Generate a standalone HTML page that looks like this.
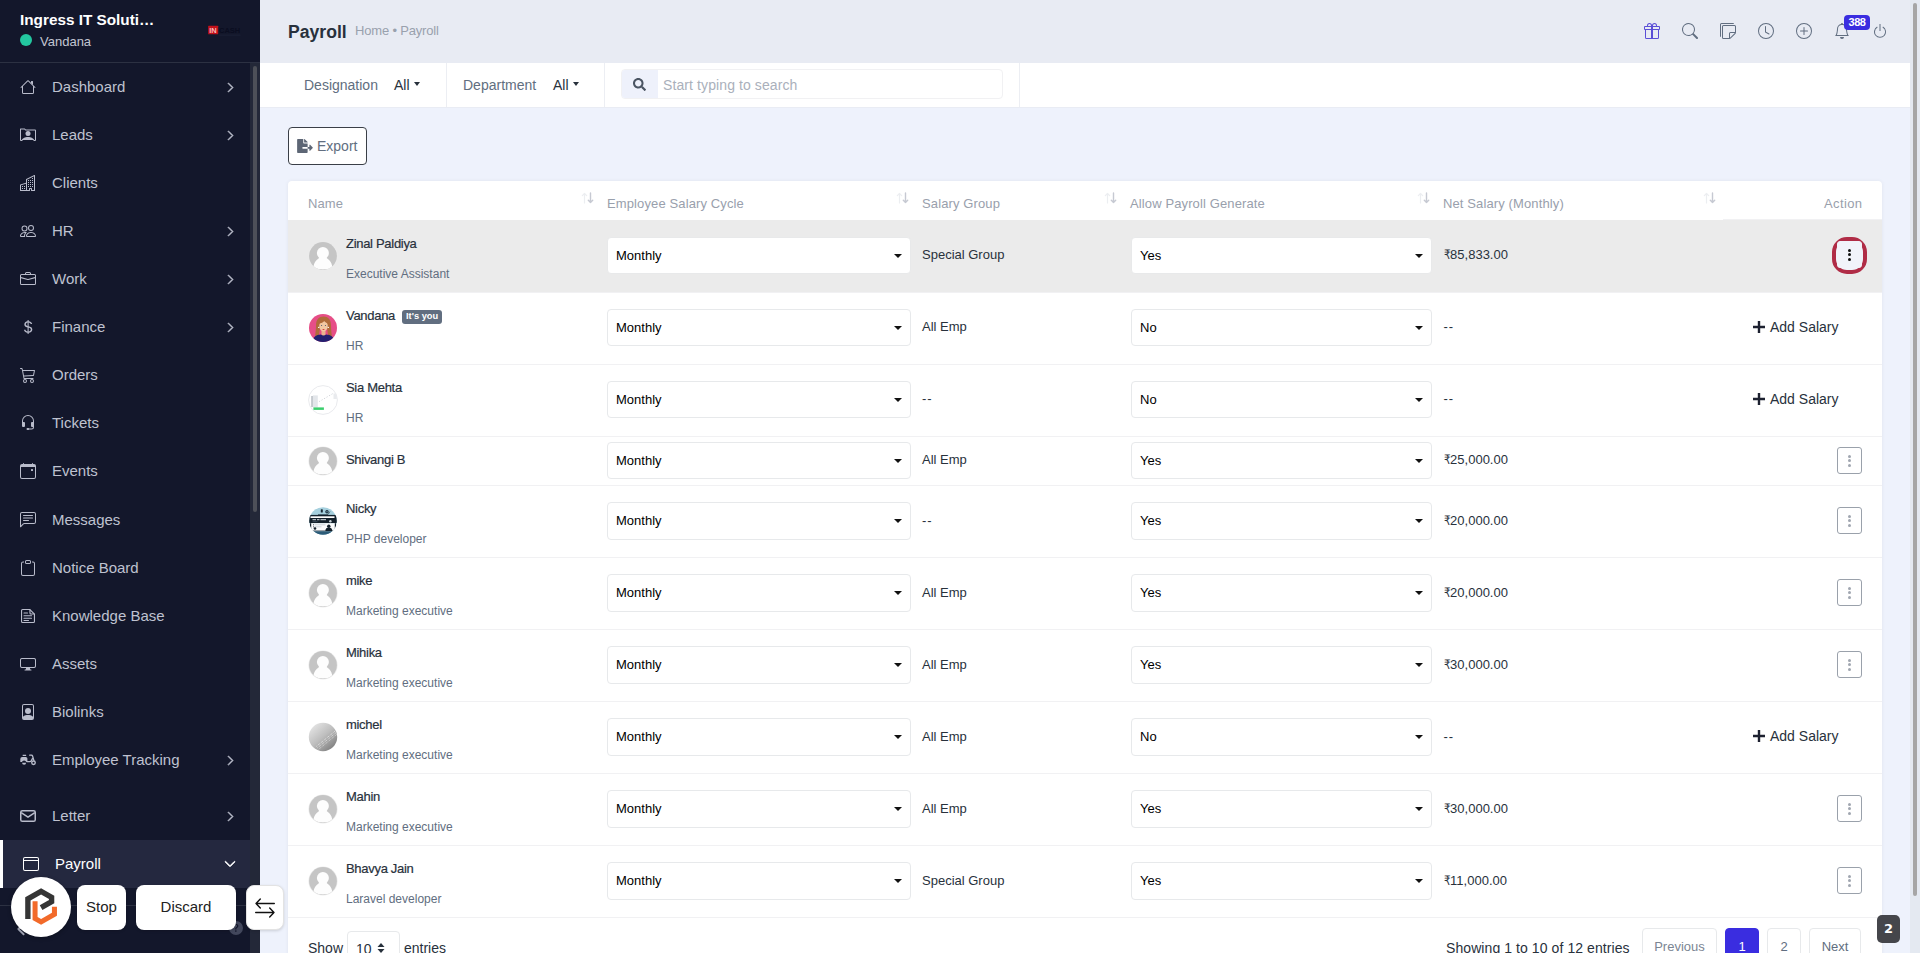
<!DOCTYPE html>
<html lang="en">
<head>
<meta charset="utf-8">
<title>Payroll</title>
<style>
*{box-sizing:border-box;margin:0;padding:0}
html,body{width:1920px;height:953px;overflow:hidden}
body{font-family:"Liberation Sans",Arial,sans-serif;background:#eef2fc;color:#28313c;position:relative;font-size:13px}
.abs{position:absolute}
svg{display:block}
/* sidebar */
#sidebar{position:absolute;left:0;top:0;width:260px;height:953px;background:#13172b;overflow:hidden}
#sb-head{position:absolute;left:0;top:0;width:260px;height:63px;border-bottom:1px solid #2c3142}
#sb-head .co{position:absolute;left:20px;top:11px;font-size:15.300px;font-weight:bold;color:#fff;letter-spacing:0px;white-space:nowrap}
#sb-head .dot{position:absolute;left:20px;top:34px;width:12px;height:12px;border-radius:50%;background:#23c7a0}
#sb-head .usr{position:absolute;left:40px;top:34px;font-size:13px;color:#c3c6d2;white-space:nowrap}
#sb-track{position:absolute;left:250px;top:63px;width:10px;height:890px;background:#232838}
#sb-thumb{position:absolute;left:253px;top:66px;width:4px;height:446px;background:#4d5058;border-radius:2px}
.mi{position:absolute;left:0;width:250px;height:48px}
.mi .ic{position:absolute;left:20px;top:16px;width:16px;height:16px;fill:#b9bccb;color:#b9bccb}
.mi .tx{position:absolute;left:52px;top:14px;font-size:15px;line-height:20px;color:#bfc2d0;white-space:nowrap}
.mi .ch{position:absolute;left:225px;top:19px;width:11px;height:11px;fill:#c0c3d1;stroke:#c0c3d1;stroke-width:1.300}
.mi.act{background:#24283f}
.mi.act .tx{color:#fff;left:55px}
.mi.act .ic{fill:#fff;color:#fff;left:23px}
.mi.act .ch{fill:#fff;stroke:#fff;stroke-width:1.300;left:224px;top:18px;width:12px;height:12px}
.mi.act:before{content:"";position:absolute;left:0;top:0;width:3px;height:48px;background:#fff}
/* header */
#hdr{position:absolute;left:260px;top:0;width:1650px;height:63px;background:#e8ebf3}
#hdr h1{position:absolute;left:28px;top:22px;font-size:17.600px;line-height:20px;font-weight:bold;color:#28313c}
#hdr .bc{position:absolute;left:95px;top:23px;font-size:13px;line-height:16px;color:#99a1ad;white-space:nowrap;letter-spacing:-.18px}
.hi{position:absolute;top:23px;width:16px;height:16px;fill:#616e80}
/* scrollbar */
#pg-track{position:absolute;left:1910px;top:0;width:10px;height:953px;background:#e4e9f1}
#pg-thumb{position:absolute;left:1913px;top:3px;width:4px;height:893px;background:#a6a6a6;border-radius:2px}

/* filter bar */
#fbar{position:absolute;left:260px;top:63px;width:1650px;height:45px;background:#fff;border-bottom:1px solid #e9ecf4}
#fbar .fl{position:absolute;top:14px;font-size:14px;line-height:16px;color:#616e80}
#fbar .fv{position:absolute;top:14px;font-size:14px;line-height:16px;color:#28313c}
#fbar .vr{position:absolute;top:0;width:1px;height:44px;background:#eceef3}
.car{position:absolute;top:19px;width:0;height:0;border-left:3.700px solid transparent;border-right:3.700px solid transparent;border-top:4.300px solid #28313c;margin-left:-.6px}
#sbox{position:absolute;left:361px;top:6px;width:382px;height:30px;border:1px solid #f1f1f3;border-radius:4px;background:#fff;overflow:hidden}
#sbox .sic{position:absolute;left:0;top:0;width:36px;height:30px;background:#eef1fb}
#sbox .sic svg{position:absolute;left:11px;top:8px;fill:#4b5563}
#sbox .ph{position:absolute;left:41px;top:7px;font-size:14px;letter-spacing:.1px;line-height:16px;color:#aab0bb;white-space:nowrap}
#export{position:absolute;left:288px;top:127px;width:79px;height:38px;background:#fff;border:1px solid #3a3f47;border-radius:4px}
#export svg{position:absolute;left:8px;top:11px;fill:#5d6675}
#export span{position:absolute;left:28px;top:10px;font-size:14px;line-height:16px;color:#616e80}
/* table */
#tbl{position:absolute;left:288px;top:181px;width:1594px;height:800px;background:#fff;border-radius:4px;box-shadow:0 0 4px rgba(0,0,0,.06)}
#tbl .th{position:absolute;top:15px;font-size:13px;line-height:16px;color:#99a0ac;white-space:nowrap;letter-spacing:.12px}
#tbl .srt{position:absolute;top:11px}
.tr{position:absolute;left:0;width:1594px}
.tr .ln{position:absolute;left:0;top:0;width:1594px;height:1px;background:#f1f1f3}
.tr.hl{background:#ebebeb}
.tr .av{position:absolute;left:20px;width:30px;height:30px}
.tr .nm{position:absolute;left:58px;font-size:13px;line-height:16px;color:#28313c;white-space:nowrap;letter-spacing:-.3px;-webkit-text-stroke:.2px #28313c}
.tr .ds{position:absolute;left:58px;font-size:12px;line-height:16px;color:#616e80;white-space:nowrap}
.tr .you{display:inline-block;margin-left:7px;background:#616e80;color:#fff;font-size:9.300px;font-weight:bold;line-height:13.500px;height:13.500px;padding:0 4px;letter-spacing:0;-webkit-text-stroke:0;border-radius:3px;vertical-align:1px}
.tr .sel{position:absolute;height:37px;border:1px solid #e7e9eb;border-radius:4px;background:#fff;font-size:13px;line-height:16px;color:#000;padding:10px 0 0 8px}
.tr.hl .sel{border-color:#e8e9ea}
.car2{position:absolute;width:0;height:0;border-left:4px solid transparent;border-right:4px solid transparent;border-top:4px solid #111}
.tr .tx{position:absolute;font-size:13px;line-height:16px;color:#28313c;white-space:nowrap;font-family:"Liberation Sans","DejaVu Sans",sans-serif}
.tr .add{position:absolute;left:1465px;font-size:14px;line-height:18px;color:#28313c;white-space:nowrap}
.tr .add svg{display:inline-block;margin-right:5px;vertical-align:-1px}
.tr .act{position:absolute;left:1549px;width:25px;height:27px;border:1px solid #9aa1ab;border-radius:3px;background:#fff}
.tr .act i{display:block;width:3px;height:3px;border-radius:50%;background:#a0a6b0;margin:0 auto 1.700px}
.tr .act i:first-child{margin-top:6.500px}
.tr .act.a1{border-color:#f1f3fa;background:#f1f3fa}
.tr .act.a1 i{background:#111}
.tr .ring{position:absolute;left:1544px;width:35px;height:37px;border:4px solid #b02c46;border-radius:15px;background:#f1f3fa}
.pb{position:absolute;height:36px;border:1px solid #e7e9eb;border-radius:4px;background:#fff;font-size:13px;line-height:16px;padding-top:10px;text-align:center;color:#616e80}
.ru{display:inline-block;transform:scaleX(.8);transform-origin:0 50%;margin-right:-1.700px}
/* overlay */
#ov-logo{position:absolute;left:11px;top:877px;width:60px;height:60px;border-radius:50%;background:#fff;box-shadow:0 1px 4px rgba(0,0,0,.3)}
#ov-logo svg{position:absolute;left:0;top:0}
.ovb{position:absolute;top:885px;height:45px;border-radius:8px;background:#fff;font-size:15px;line-height:43px;text-align:center;color:#222;box-shadow:0 1px 3px rgba(0,0,0,.15)}
</style>
</head>
<body>
<div id="sidebar">
<div id="sb-head"><div class="co">Ingress IT Soluti…</div><div class="dot"></div><div class="usr">Vandana</div><svg class="abs" style="left:208px;top:25px" width="34" height="12" viewBox="0 0 34 12"><rect x="0.200" y="0.700" width="10" height="8.500" rx=".5" fill="#c3111a"/><text x="1.200" y="7.700" font-family="Liberation Sans,sans-serif" font-size="7.500" font-weight="bold" fill="#f7b9b9">IN</text><text x="11" y="7.700" font-family="Liberation Sans,sans-serif" font-size="7.500" font-weight="bold" fill="#0a0d20">CASH</text><rect x="10.500" y="9.600" width="22" height="1" fill="#1c2136"/></svg></div>
<div id="sb-track"></div><div id="sb-thumb"></div>
<div class="mi" style="top:63px"><svg class="ic" style="" viewBox="0 0 16 16"><path fill-rule="evenodd" d="M2 13.5V7h1v6.5a.5.5 0 0 0 .5.5h9a.5.5 0 0 0 .5-.5V7h1v6.5a1.5 1.5 0 0 1-1.5 1.5h-9A1.5 1.5 0 0 1 2 13.5zm11-11V6l-2-2V2.5a.5.5 0 0 1 .5-.5h1a.5.5 0 0 1 .5.5z"/><path fill-rule="evenodd" d="M7.293 1.5a1 1 0 0 1 1.414 0l6.647 6.646a.5.5 0 0 1-.708.708L8 2.207 1.354 8.854a.5.5 0 1 1-.708-.708L7.293 1.5z"/></svg><div class="tx">Dashboard</div><svg class="ch" style="" viewBox="0 0 16 16"><path fill-rule="evenodd" d="M4.646 1.646a.5.5 0 0 1 .708 0l6 6a.5.5 0 0 1 0 .708l-6 6a.5.5 0 0 1-.708-.708L10.293 8 4.646 2.354a.5.5 0 0 1 0-.708z"/></svg></div>
<div class="mi" style="top:111px"><svg class="ic" style="" viewBox="0 0 16 16"><path d="M8 9.050a2.500 2.500 0 1 0 0-5 2.500 2.500 0 0 0 0 5Z"/><path d="M.5 1.500h4.300l1 1H15a1 1 0 0 1 1 1v9.500a1 1 0 0 1-1 1h-1.200l-.6-.9H2.800l-.6.900H1a1 1 0 0 1-1-1V2a.5.5 0 0 1 .5-.5zM1 2.500V13h.7c.453-1.270 3.263-3 6.300-3 3.038 0 5.847 1.730 6.300 3H15V3.500H5.400l-1-1z"/></svg><div class="tx">Leads</div><svg class="ch" style="" viewBox="0 0 16 16"><path fill-rule="evenodd" d="M4.646 1.646a.5.5 0 0 1 .708 0l6 6a.5.5 0 0 1 0 .708l-6 6a.5.5 0 0 1-.708-.708L10.293 8 4.646 2.354a.5.5 0 0 1 0-.708z"/></svg></div>
<div class="mi" style="top:159px"><svg class="ic" style="" viewBox="0 0 16 16"><path fill-rule="evenodd" d="M14.763.075A.5.5 0 0 1 15 .5v15a.5.5 0 0 1-.5.5h-3a.5.5 0 0 1-.5-.5V14h-1v1.5a.5.5 0 0 1-.5.5h-9a.5.5 0 0 1-.5-.5V10a.5.5 0 0 1 .342-.474L6 7.64V4.5a.5.5 0 0 1 .276-.447l8-4a.5.5 0 0 1 .487.022zM6 8.694 1 10.36V15h5V8.694zM7 15h2v-1.5a.5.5 0 0 1 .5-.5h2a.5.5 0 0 1 .5.5V15h2V1.309l-7 3.5V15z"/><path d="M2 11h1v1H2v-1zm2 0h1v1H4v-1zm-2 2h1v1H2v-1zm2 0h1v1H4v-1zm4-4h1v1H8V9zm2 0h1v1h-1V9zm-2 2h1v1H8v-1zm2 0h1v1h-1v-1zm2-2h1v1h-1V9zm0 2h1v1h-1v-1zM8 7h1v1H8V7zm2 0h1v1h-1V7zm2 0h1v1h-1V7zM8 5h1v1H8V5zm2 0h1v1h-1V5zm2 0h1v1h-1V5zm0-2h1v1h-1V3z"/></svg><div class="tx">Clients</div></div>
<div class="mi" style="top:207px"><svg class="ic" style="" viewBox="0 0 16 16"><path d="M15 14s1 0 1-1-1-4-5-4-5 3-5 4 1 1 1 1h8zm-7.978-1A.261.261 0 0 1 7 12.996c.001-.264.167-1.03.76-1.72C8.312 10.629 9.282 10 11 10c1.717 0 2.687.63 3.24 1.276.593.69.758 1.457.76 1.72l-.008.002a.274.274 0 0 1-.014.002H7.022zM11 7a2 2 0 1 0 0-4 2 2 0 0 0 0 4zm3-2a3 3 0 1 1-6 0 3 3 0 0 1 6 0zM6.936 9.28a5.88 5.88 0 0 0-1.23-.247A7.35 7.35 0 0 0 5 9c-4 0-5 3-5 4 0 .667.333 1 1 1h4.216A2.238 2.238 0 0 1 5 13c0-1.01.377-2.042 1.09-2.904.243-.294.526-.569.846-.816zM4.92 10A5.493 5.493 0 0 0 4 13H1c0-.26.164-1.03.76-1.724.545-.636 1.492-1.256 3.16-1.275zM1.5 5.5a3 3 0 1 1 6 0 3 3 0 0 1-6 0zm3-2a2 2 0 1 0 0 4 2 2 0 0 0 0-4z"/></svg><div class="tx">HR</div><svg class="ch" style="" viewBox="0 0 16 16"><path fill-rule="evenodd" d="M4.646 1.646a.5.5 0 0 1 .708 0l6 6a.5.5 0 0 1 0 .708l-6 6a.5.5 0 0 1-.708-.708L10.293 8 4.646 2.354a.5.5 0 0 1 0-.708z"/></svg></div>
<div class="mi" style="top:255px"><svg class="ic" style="" viewBox="0 0 16 16"><path d="M6.5 1A1.5 1.5 0 0 0 5 2.5V3H1.5A1.5 1.5 0 0 0 0 4.5v8A1.5 1.5 0 0 0 1.5 14h13a1.5 1.5 0 0 0 1.5-1.5v-8A1.5 1.5 0 0 0 14.5 3H11v-.5A1.5 1.5 0 0 0 9.5 1h-3zm0 1h3a.5.5 0 0 1 .5.5V3H6v-.5a.5.5 0 0 1 .5-.5zm1.886 6.914L15 7.151V12.5a.5.5 0 0 1-.5.5h-13a.5.5 0 0 1-.5-.5V7.15l6.614 1.764a1.5 1.5 0 0 0 .772 0zM1.5 4h13a.5.5 0 0 1 .5.5v1.616L8.129 7.948a.5.5 0 0 1-.258 0L1 6.116V4.5a.5.5 0 0 1 .5-.5z"/></svg><div class="tx">Work</div><svg class="ch" style="" viewBox="0 0 16 16"><path fill-rule="evenodd" d="M4.646 1.646a.5.5 0 0 1 .708 0l6 6a.5.5 0 0 1 0 .708l-6 6a.5.5 0 0 1-.708-.708L10.293 8 4.646 2.354a.5.5 0 0 1 0-.708z"/></svg></div>
<div class="mi" style="top:303px"><svg class="ic" style="" viewBox="0 0 16 16"><path d="M4 10.781c.148 1.667 1.513 2.85 3.591 3.003V15h1.043v-1.216c2.27-.179 3.678-1.438 3.678-3.3 0-1.59-.947-2.51-2.956-3.028l-.722-.187V3.467c1.122.11 1.879.714 2.07 1.616h1.47c-.166-1.6-1.54-2.748-3.54-2.875V1H7.591v1.233c-1.939.23-3.27 1.472-3.27 3.156 0 1.454.966 2.483 2.661 2.917l.61.162v4.031c-1.149-.17-1.94-.8-2.131-1.718H4zm3.391-3.836c-1.043-.263-1.6-.825-1.6-1.616 0-.944.704-1.641 1.8-1.828v3.495l-.2-.05zm1.591 1.872c1.287.323 1.852.859 1.852 1.769 0 1.097-.826 1.828-2.2 1.939V8.73l.348.086z"/></svg><div class="tx">Finance</div><svg class="ch" style="" viewBox="0 0 16 16"><path fill-rule="evenodd" d="M4.646 1.646a.5.5 0 0 1 .708 0l6 6a.5.5 0 0 1 0 .708l-6 6a.5.5 0 0 1-.708-.708L10.293 8 4.646 2.354a.5.5 0 0 1 0-.708z"/></svg></div>
<div class="mi" style="top:351px"><svg class="ic" style="" viewBox="0 0 16 16"><path d="M0 1.5A.5.5 0 0 1 .5 1H2a.5.5 0 0 1 .485.379L2.89 3H14.5a.5.5 0 0 1 .49.598l-1 5a.5.5 0 0 1-.465.401l-9.397.472L4.415 11H13a.5.5 0 0 1 0 1H4a.5.5 0 0 1-.491-.408L2.01 3.607 1.61 2H.5a.5.5 0 0 1-.5-.5zM3.102 4l.84 4.479 9.144-.459L13.89 4H3.102zM5 12a2 2 0 1 0 0 4 2 2 0 0 0 0-4zm7 0a2 2 0 1 0 0 4 2 2 0 0 0 0-4zm-7 1a1 1 0 1 1 0 2 1 1 0 0 1 0-2zm7 0a1 1 0 1 1 0 2 1 1 0 0 1 0-2z"/></svg><div class="tx">Orders</div></div>
<div class="mi" style="top:399px"><svg class="ic" style="" viewBox="0 0 16 16"><path d="M8 1a5 5 0 0 0-5 5v1h1a1 1 0 0 1 1 1v3a1 1 0 0 1-1 1H3a1 1 0 0 1-1-1V6a6 6 0 1 1 12 0v6a2.5 2.5 0 0 1-2.5 2.5H9.366a1 1 0 0 1-.866.5h-1a1 1 0 1 1 0-2h1a1 1 0 0 1 .866.5H11.5A1.5 1.5 0 0 0 13 12h-1a1 1 0 0 1-1-1V8a1 1 0 0 1 1-1h1V6a5 5 0 0 0-5-5z"/></svg><div class="tx">Tickets</div></div>
<div class="mi" style="top:447px"><svg class="ic" style="" viewBox="0 0 16 16"><path d="M11 6.5a.5.5 0 0 1 .5-.5h1a.5.5 0 0 1 .5.5v1a.5.5 0 0 1-.5.5h-1a.5.5 0 0 1-.5-.5v-1z"/><path d="M3.5 0a.5.5 0 0 1 .5.5V1h8V.5a.5.5 0 0 1 1 0V1h1a2 2 0 0 1 2 2v11a2 2 0 0 1-2 2H2a2 2 0 0 1-2-2V3a2 2 0 0 1 2-2h1V.5a.5.5 0 0 1 .5-.5zM1 4v10a1 1 0 0 0 1 1h12a1 1 0 0 0 1-1V4H1z"/></svg><div class="tx">Events</div></div>
<div class="mi" style="top:496px"><svg class="ic" style="" viewBox="0 0 16 16"><path d="M14 1a1 1 0 0 1 1 1v8a1 1 0 0 1-1 1H4.414A2 2 0 0 0 3 11.586l-2 2V2a1 1 0 0 1 1-1h12zM2 0a2 2 0 0 0-2 2v12.793a.5.5 0 0 0 .854.353l2.853-2.853A1 1 0 0 1 4.414 12H14a2 2 0 0 0 2-2V2a2 2 0 0 0-2-2H2z"/><path d="M3 3.5a.5.5 0 0 1 .5-.5h9a.5.5 0 0 1 0 1h-9a.5.5 0 0 1-.5-.5zM3 6a.5.5 0 0 1 .5-.5h9a.5.5 0 0 1 0 1h-9A.5.5 0 0 1 3 6zm0 2.5a.5.5 0 0 1 .5-.5h5a.5.5 0 0 1 0 1h-5a.5.5 0 0 1-.5-.5z"/></svg><div class="tx">Messages</div></div>
<div class="mi" style="top:544px"><svg class="ic" style="" viewBox="0 0 16 16"><path d="M4 1.5H3a2 2 0 0 0-2 2V14a2 2 0 0 0 2 2h10a2 2 0 0 0 2-2V3.5a2 2 0 0 0-2-2h-1v1h1a1 1 0 0 1 1 1V14a1 1 0 0 1-1 1H3a1 1 0 0 1-1-1V3.5a1 1 0 0 1 1-1h1v-1z"/><path d="M9.5 1a.5.5 0 0 1 .5.5v1a.5.5 0 0 1-.5.5h-3a.5.5 0 0 1-.5-.5v-1a.5.5 0 0 1 .5-.5h3zm-3-1A1.5 1.5 0 0 0 5 1.5v1A1.5 1.5 0 0 0 6.5 4h3A1.5 1.5 0 0 0 11 2.5v-1A1.5 1.5 0 0 0 9.5 0h-3z"/></svg><div class="tx">Notice Board</div></div>
<div class="mi" style="top:592px"><svg class="ic" style="" viewBox="0 0 16 16"><g fill="none" stroke="currentColor" stroke-width="1.100" stroke-linejoin="round" stroke-linecap="round"><path d="M1.550 2.550a1 1 0 0 1 1-1h7.400l4.500 4.500v7.400a1 1 0 0 1-1 1H2.550a1 1 0 0 1-1-1z"/><path d="M9.950 1.700V5a1 1 0 0 0 1 1h3.300"/><path d="M4 5h3.500M4 7.800h7.500M4 10.300h7.500M4 12.500h4.500"/></g></svg><div class="tx">Knowledge Base</div></div>
<div class="mi" style="top:640px"><svg class="ic" style="" viewBox="0 0 16 16"><path d="M0 4s0-2 2-2h12s2 0 2 2v6s0 2-2 2h-4c0 .667.083 1.167.25 1.5H11a.5.5 0 0 1 0 1H5a.5.5 0 0 1 0-1h.75c.167-.333.25-.833.25-1.5H2s-2 0-2-2V4zm1.398-.855a.758.758 0 0 0-.254.302A1.460 1.460 0 0 0 1 4.01V10c0 .325.078.502.145.602.07.105.17.188.302.254a1.464 1.464 0 0 0 .538.143L2.01 11H14c.325 0 .502-.078.602-.145a.758.758 0 0 0 .254-.302 1.464 1.464 0 0 0 .143-.538L15 9.99V4c0-.325-.078-.502-.145-.602a.757.757 0 0 0-.302-.254A1.460 1.460 0 0 0 13.99 3H2c-.325 0-.502.078-.602.145z"/></svg><div class="tx">Assets</div></div>
<div class="mi" style="top:688px"><svg class="ic" style="" viewBox="0 0 16 16"><path d="M12 1a1 1 0 0 1 1 1v10.755S12 11 8 11s-5 1.755-5 1.755V2a1 1 0 0 1 1-1h8zM4 0a2 2 0 0 0-2 2v12a2 2 0 0 0 2 2h8a2 2 0 0 0 2-2V2a2 2 0 0 0-2-2H4z"/><path d="M8 10a3 3 0 1 0 0-6 3 3 0 0 0 0 6z"/></svg><div class="tx">Biolinks</div></div>
<div class="mi" style="top:736px"><svg class="ic" style="" viewBox="0 0 16 16"><rect x="2.600" y="2.700" width="3.600" height="1.200" rx=".3"/><path d="M2.300 5h3.500a1.600 1.600 0 0 1 1.600 1.600v3.500H6.300a2.300 2.300 0 0 0-4.400 0H.300V7a2 2 0 0 1 2-2z"/><path d="M2.100 10.800a2 2 0 0 0 4 0z"/><path d="M9.700 3.200h1.700a1.200 1.200 0 0 1 1.150.850l1.300 4.300M7.300 9.700h2.300a2 2 0 0 0 1.800-1.100l.9-1.900" fill="none" stroke="currentColor" stroke-width="1.300" stroke-linecap="round" stroke-linejoin="round"/><circle cx="13.500" cy="10.800" r="1.750" fill="none" stroke="currentColor" stroke-width="1.400"/></svg><div class="tx">Employee Tracking</div><svg class="ch" style="" viewBox="0 0 16 16"><path fill-rule="evenodd" d="M4.646 1.646a.5.5 0 0 1 .708 0l6 6a.5.5 0 0 1 0 .708l-6 6a.5.5 0 0 1-.708-.708L10.293 8 4.646 2.354a.5.5 0 0 1 0-.708z"/></svg></div>
<div class="mi" style="top:792px"><svg class="ic" style="" viewBox="0 0 16 16"><rect x="0.750" y="2.750" width="14.500" height="10.500" rx="1.600" fill="none" stroke="currentColor" stroke-width="1.500"/><path d="M1.200 4.600L8 9.200l6.800-4.600" fill="none" stroke="currentColor" stroke-width="1.500" stroke-linejoin="round"/></svg><div class="tx">Letter</div><svg class="ch" style="" viewBox="0 0 16 16"><path fill-rule="evenodd" d="M4.646 1.646a.5.5 0 0 1 .708 0l6 6a.5.5 0 0 1 0 .708l-6 6a.5.5 0 0 1-.708-.708L10.293 8 4.646 2.354a.5.5 0 0 1 0-.708z"/></svg></div>
<div class="mi act" style="top:840px"><svg class="ic" style="" viewBox="0 0 16 16"><path d="M14 2a1 1 0 0 1 1 1v10a1 1 0 0 1-1 1H2a1 1 0 0 1-1-1V3a1 1 0 0 1 1-1h12zM2 1a2 2 0 0 0-2 2v10a2 2 0 0 0 2 2h12a2 2 0 0 0 2-2V3a2 2 0 0 0-2-2H2z"/><path d="M1 4h14v1H1z"/></svg><div class="tx">Payroll</div><svg class="ch" style="" viewBox="0 0 16 16"><path fill-rule="evenodd" d="M1.646 4.646a.5.5 0 0 1 .708 0L8 10.293l5.646-5.647a.5.5 0 0 1 .708.708l-6 6a.5.5 0 0 1-.708 0l-6-6a.5.5 0 0 1 0-.708z"/></svg></div>
<div class="abs" style="left:0;top:905px;width:260px;height:1px;background:#2c3142"></div>
<svg class="abs" style="left:14px;top:922px;width:14px;height:14px;fill:#a9adbd;stroke:#a9adbd;stroke-width:1.2" viewBox="0 0 16 16"><path fill-rule="evenodd" d="M11.354 1.646a.5.5 0 0 1 0 .708L5.707 8l5.647 5.646a.5.5 0 0 1-.708.708l-6-6a.5.5 0 0 1 0-.708l6-6a.5.5 0 0 1 .708 0z"/></svg>
<svg class="abs" style="left:229px;top:921px;width:14px;height:14px;fill:#42475c" viewBox="0 0 16 16"><path d="M16 8A8 8 0 1 1 0 8a8 8 0 0 1 16 0zM5.496 6.033h.825c.138 0 .248-.113.266-.25.09-.656.54-1.134 1.342-1.134.686 0 1.314.343 1.314 1.168 0 .635-.374.927-.965 1.371-.673.489-1.206 1.060-1.168 1.987l.003.217a.25.25 0 0 0 .25.246h.811a.25.25 0 0 0 .25-.25v-.105c0-.718.273-.927 1.010-1.486.609-.463 1.244-.977 1.244-2.056 0-1.511-1.276-2.241-2.673-2.241-1.267 0-2.655.590-2.750 2.286a.237.237 0 0 0 .241.247zm2.325 6.443c.61 0 1.029-.394 1.029-.927 0-.552-.42-.940-1.029-.940-.584 0-1.009.388-1.009.940 0 .533.425.927 1.010.927z"/></svg>
</div>
<div id="hdr"><h1>Payroll</h1><div class="bc">Home &bull; Payroll</div>
<svg class="hi" style="left:1384px;fill:#5b4fd6" viewBox="0 0 16 16"><path d="M3 2.5a2.5 2.5 0 0 1 5 0 2.5 2.5 0 0 1 5 0v.006c0 .07 0 .27-.038.494H15a1 1 0 0 1 1 1v2a1 1 0 0 1-1 1v7.5a1.5 1.5 0 0 1-1.5 1.5h-11A1.5 1.5 0 0 1 1 14.5V7a1 1 0 0 1-1-1V4a1 1 0 0 1 1-1h2.038A2.968 2.968 0 0 1 3 2.506V2.5zm1.068.5H7v-.5a1.5 1.5 0 1 0-3 0c0 .085.002.274.045.43a.522.522 0 0 0 .023.07zM9 3h2.932a.56.56 0 0 0 .023-.07c.043-.156.045-.345.045-.43a1.5 1.5 0 0 0-3 0V3zM1 4v2h6V4H1zm8 0v2h6V4H9zm5 3H9v8h4.5a.5.5 0 0 0 .5-.5V7zm-7 8V7H2v7.5a.5.5 0 0 0 .5.5H7z"/></svg>
<svg class="hi" style="left:1422px" viewBox="0 0 16 16"><path d="M11.742 10.344a6.5 6.5 0 1 0-1.397 1.398h-.001c.03.04.062.078.098.115l3.85 3.85a1 1 0 0 0 1.415-1.414l-3.85-3.85a1.007 1.007 0 0 0-.115-.1zM12 6.5a5.5 5.5 0 1 1-11 0 5.500 5.500 0 0 1 11 0z"/></svg>
<svg class="hi" style="left:1460px" viewBox="0 0 16 16"><path d="M1.5 0A1.5 1.5 0 0 0 0 1.5V13a1 1 0 0 0 1 1V1.5a.5.5 0 0 1 .5-.5H14a1 1 0 0 0-1-1H1.5z"/><path d="M3.5 2A1.5 1.5 0 0 0 2 3.5v11A1.5 1.5 0 0 0 3.5 16h6.086a1.5 1.5 0 0 0 1.06-.44l4.915-4.914A1.5 1.5 0 0 0 16 9.586V3.5A1.5 1.5 0 0 0 14.5 2h-11zM3 3.5a.5.5 0 0 1 .5-.5h11a.5.5 0 0 1 .5.5V9h-4.5A1.5 1.5 0 0 0 9 10.5V15H3.5a.5.5 0 0 1-.5-.5v-11zm7 11.293V10.5a.5.5 0 0 1 .5-.5h4.293L10 14.793z"/></svg>
<svg class="hi" style="left:1498px" viewBox="0 0 16 16"><path d="M8 3.5a.5.5 0 0 0-1 0V9a.5.5 0 0 0 .252.434l3.5 2a.5.5 0 0 0 .496-.868L8 8.71V3.5z"/><path d="M8 16A8 8 0 1 0 8 0a8 8 0 0 0 0 16zm7-8A7 7 0 1 1 1 8a7 7 0 0 1 14 0z"/></svg>
<svg class="hi" style="left:1536px" viewBox="0 0 16 16"><path d="M8 15A7 7 0 1 1 8 1a7 7 0 0 1 0 14zm0 1A8 8 0 1 0 8 0a8 8 0 0 0 0 16z"/><path d="M8 4a.5.5 0 0 1 .5.5v3h3a.5.5 0 0 1 0 1h-3v3a.5.5 0 0 1-1 0v-3h-3a.5.5 0 0 1 0-1h3v-3A.5.5 0 0 1 8 4z"/></svg>
<svg class="hi" style="left:1574px" viewBox="0 0 16 16"><path d="M8 16a2 2 0 0 0 2-2H6a2 2 0 0 0 2 2zM8 1.918l-.797.161A4.002 4.002 0 0 0 4 6c0 .628-.134 2.197-.459 3.742-.16.767-.376 1.566-.663 2.258h10.244c-.287-.692-.502-1.49-.663-2.258C12.134 8.197 12 6.628 12 6a4.002 4.002 0 0 0-3.203-3.92L8 1.917zM14.22 12c.223.447.481.801.78 1H1c.299-.199.557-.553.78-1C2.68 10.2 3 6.88 3 6c0-2.42 1.72-4.44 4.005-4.901a1 1 0 1 1 1.99 0A5.002 5.002 0 0 1 13 6c0 .88.32 4.2 1.22 6z"/></svg>
<svg class="hi" style="left:1612px" viewBox="0 0 16 16"><path d="M7.5 1v7h1V1h-1z"/><path d="M3 8.812a4.999 4.999 0 0 1 2.578-4.375l-.485-.874A6 6 0 1 0 11 3.616l-.501.865A5 5 0 1 1 3 8.812z"/></svg>
<div class="abs" style="left:1584px;top:15px;width:26px;height:15px;border-radius:4px;background:#3a2de0;color:#fff;font-size:11px;line-height:15px;text-align:center;font-weight:bold;letter-spacing:-0.5px">388</div>
</div>
<div id="pg-track"></div><div id="pg-thumb"></div>
<div id="fbar">
<div class="fl" style="left:44px">Designation</div><div class="fv" style="left:134px">All</div><i class="car" style="left:155px"></i>
<div class="vr" style="left:186px"></div>
<div class="fl" style="left:203px">Department</div><div class="fv" style="left:293px">All</div><i class="car" style="left:314px"></i>
<div class="vr" style="left:344px"></div>
<div id="sbox"><div class="sic"><svg viewBox="0 0 512 512" width="13" height="13"><path d="M505 442.700L405.300 343c-4.500-4.500-10.600-7-17-7H372c27.600-35.300 44-79.700 44-128C416 93.100 322.900 0 208 0S0 93.100 0 208s93.100 208 208 208c48.300 0 92.700-16.400 128-44v16.300c0 6.400 2.500 12.500 7 17l99.700 99.700c9.400 9.400 24.600 9.400 33.900 0l28.300-28.300c9.400-9.400 9.400-24.600.100-34zM208 336c-70.700 0-128-57.200-128-128 0-70.700 57.200-128 128-128 70.700 0 128 57.200 128 128 0 70.700-57.200 128-128 128z"/></svg></div><div class="ph">Start typing to search</div></div>
<div class="vr" style="left:759px"></div>
</div>
<div id="export"><svg viewBox="0 0 576 512" width="16" height="14"><path d="M384 121.900c0-6.300-2.500-12.400-7-16.900L279.100 7c-4.500-4.500-10.600-7-17-7H256v128h128v-6.100zM571 308l-95.700-96.400c-10.100-10.100-27.400-3-27.400 11.300V288h-64v64h64v65.200c0 14.300 17.300 21.400 27.400 11.300L571 332c6.600-6.600 6.600-17.400 0-24zm-379 28v-32c0-8.800 7.200-16 16-16h176V160H248c-13.200 0-24-10.800-24-24V0H24C10.700 0 0 10.700 0 24v464c0 13.300 10.700 24 24 24h336c13.300 0 24-10.700 24-24V352H208c-8.800 0-16-7.200-16-16z"/></svg><span>Export</span></div>
<div id="tbl">
<div class="th" style="left:20px">Name</div><div class="th" style="left:319px">Employee Salary Cycle</div><div class="th" style="left:634px">Salary Group</div><div class="th" style="left:842px">Allow Payroll Generate</div><div class="th" style="left:1155px">Net Salary (Monthly)</div><div class="th" style="right:19.500px;letter-spacing:.4px">Action</div>
<div class="abs" style="left:1435px;top:38px;width:159px;height:1px;background:#f1f1f3"></div>
<svg class="srt" style="left:293px" viewBox="0 0 13 12" width="13" height="12"><g fill="none" stroke-width="1.200" stroke-linecap="round" stroke-linejoin="round"><path d="M3.500 11V1.500M1.300 3.700L3.500 1.500 5.700 3.700" stroke="#eceef1"/><path d="M9.500 1v9.500M7.300 8.300L9.500 10.500 11.700 8.300" stroke="#c6c9d2" stroke-width="1.400"/></g></svg>
<svg class="srt" style="left:608px" viewBox="0 0 13 12" width="13" height="12"><g fill="none" stroke-width="1.200" stroke-linecap="round" stroke-linejoin="round"><path d="M3.500 11V1.500M1.300 3.700L3.500 1.500 5.700 3.700" stroke="#eceef1"/><path d="M9.500 1v9.500M7.300 8.300L9.500 10.500 11.700 8.300" stroke="#c6c9d2" stroke-width="1.400"/></g></svg>
<svg class="srt" style="left:816px" viewBox="0 0 13 12" width="13" height="12"><g fill="none" stroke-width="1.200" stroke-linecap="round" stroke-linejoin="round"><path d="M3.500 11V1.500M1.300 3.700L3.500 1.500 5.700 3.700" stroke="#eceef1"/><path d="M9.500 1v9.500M7.300 8.300L9.500 10.500 11.700 8.300" stroke="#c6c9d2" stroke-width="1.400"/></g></svg>
<svg class="srt" style="left:1129px" viewBox="0 0 13 12" width="13" height="12"><g fill="none" stroke-width="1.200" stroke-linecap="round" stroke-linejoin="round"><path d="M3.500 11V1.500M1.300 3.700L3.500 1.500 5.700 3.700" stroke="#eceef1"/><path d="M9.500 1v9.500M7.300 8.300L9.500 10.500 11.700 8.300" stroke="#c6c9d2" stroke-width="1.400"/></g></svg>
<svg class="srt" style="left:1415px" viewBox="0 0 13 12" width="13" height="12"><g fill="none" stroke-width="1.200" stroke-linecap="round" stroke-linejoin="round"><path d="M3.500 11V1.500M1.300 3.700L3.500 1.500 5.700 3.700" stroke="#eceef1"/><path d="M9.500 1v9.500M7.300 8.300L9.500 10.500 11.700 8.300" stroke="#c6c9d2" stroke-width="1.400"/></g></svg>
<div class="tr hl" style="top:39px;height:72px">
<svg class="av" style="top:21px" viewBox="-1 -1 30 30"><circle cx="14" cy="14" r="14.600" fill="#ececec"/><circle cx="14" cy="14" r="13.900" fill="#c5c5c5"/><clipPath id="c0"><circle cx="14" cy="14" r="13.900"/></clipPath><g clip-path="url(#c0)" fill="#fdfdfd"><circle cx="13.900" cy="11" r="6"/><path d="M10.500 15.500C9 17.500 4.700 19 4.500 25.500 7 28 21 28 23.300 25.500 23.100 19 18.800 17.500 17.300 15.500z"/></g></svg>
<div class="nm" style="top:16px">Zinal Paldiya</div><div class="ds" style="top:46px">Executive Assistant</div>
<div class="sel" style="left:319px;width:304px;top:17px">Monthly</div><i class="car2" style="left:606px;top:34px"></i>
<div class="tx" style="left:634px;top:27px">Special Group</div>
<div class="sel" style="left:843px;width:301px;top:17px">Yes</div><i class="car2" style="left:1127px;top:34px"></i>
<div class="tx" style="left:1155.500px;top:27px"><span class=ru>₹</span>85,833.00</div>
<div class="ring" style="top:17px"></div>
<div class="act a1" style="top:21px"><i></i><i></i><i></i></div>
</div>
<div class="tr" style="top:111px;height:72px">
<div class="ln"></div>
<svg class="av" style="top:21px" viewBox="-1 -1 30 30"><clipPath id="c1"><circle cx="14" cy="14" r="14"/></clipPath><g clip-path="url(#c1)"><rect x="-1" y="-1" width="30" height="30" fill="#e64e87"/><path d="M7 11.500C7 5.500 10 2.500 14.500 2.500S22 5.500 22 11.500c0 5 .8 9 1 12.500h-3.500L18 14h-7l-1.500 10H6c.2-3.500 1-7.500 1-12.500z" fill="#b06a3a"/><path d="M12.500 16h4v6h-4z" fill="#e9b48e"/><ellipse cx="14.500" cy="12" rx="4.300" ry="5.400" fill="#f2c7a2"/><path d="M10 9.500c1-3 3-4 4.800-4 2 0 3.700 1.300 4.400 4-1.500-.3-3-1.200-4-2.500-1 1.300-3 2.300-5.200 2.500z" fill="#b06a3a"/><circle cx="12.600" cy="11.500" r=".55" fill="#3b4a6b"/><circle cx="16.400" cy="11.500" r=".55" fill="#3b4a6b"/><ellipse cx="14.500" cy="15.500" rx="1.100" ry=".55" fill="#d63a3a"/><circle cx="9.700" cy="13.400" r=".7" fill="#fff"/><circle cx="19.300" cy="13.400" r=".7" fill="#fff"/><path d="M3.500 29c0-5.500 3-8.200 8.500-8.500 1.500 1.200 3.500 1.200 5 0 5.500.3 8.500 3 8.500 8.500z" fill="#22206f"/></g></svg>
<div class="nm" style="top:16px">Vandana<span class="you">It's you</span></div><div class="ds" style="top:46px">HR</div>
<div class="sel" style="left:319px;width:304px;top:17px">Monthly</div><i class="car2" style="left:606px;top:34px"></i>
<div class="tx" style="left:634px;top:27px">All Emp</div>
<div class="sel" style="left:843px;width:301px;top:17px">No</div><i class="car2" style="left:1127px;top:34px"></i>
<div class="tx" style="left:1155.500px;top:27px;letter-spacing:.8px">--</div>
<div class="add" style="top:26px"><svg viewBox="0 0 12 12" width="12" height="12"><path d="M4.800 0h2.400v4.800H12v2.400H7.200V12H4.800V7.200H0V4.800h4.800z" fill="#1d2130"/></svg>Add Salary</div>
</div>
<div class="tr" style="top:183px;height:72px">
<div class="ln"></div>
<svg class="av" style="top:21px" viewBox="-1 -1 30 30"><circle cx="14" cy="14" r="14.400" fill="#fff" stroke="#e6e8eb" stroke-width=".9"/><clipPath id="c2"><circle cx="14" cy="14" r="14"/></clipPath><g clip-path="url(#c2)"><rect x="2.600" y="10" width=".9" height="11" fill="#7d8794"/><rect x="3.800" y="9.400" width="5" height="12" fill="#e3e6ea"/><rect x="4.400" y="21.400" width="10.500" height="2.500" fill="#3ccf6e"/><path d="M10 15.700L24.500 7.200" stroke="#aab1ba" stroke-width=".5" stroke-dasharray="1.300 1.600"/><rect x="24.500" y="7.500" width="4" height="5.500" fill="#e9ebee"/></g></svg>
<div class="nm" style="top:16px">Sia Mehta</div><div class="ds" style="top:46px">HR</div>
<div class="sel" style="left:319px;width:304px;top:17px">Monthly</div><i class="car2" style="left:606px;top:34px"></i>
<div class="tx" style="left:634px;top:27px;letter-spacing:.8px">--</div>
<div class="sel" style="left:843px;width:301px;top:17px">No</div><i class="car2" style="left:1127px;top:34px"></i>
<div class="tx" style="left:1155.500px;top:27px;letter-spacing:.8px">--</div>
<div class="add" style="top:26px"><svg viewBox="0 0 12 12" width="12" height="12"><path d="M4.800 0h2.400v4.800H12v2.400H7.200V12H4.800V7.200H0V4.800h4.800z" fill="#1d2130"/></svg>Add Salary</div>
</div>
<div class="tr" style="top:255px;height:49px">
<div class="ln"></div>
<svg class="av" style="top:10px" viewBox="-1 -1 30 30"><circle cx="14" cy="14" r="14.600" fill="#ececec"/><circle cx="14" cy="14" r="13.900" fill="#c5c5c5"/><clipPath id="c3"><circle cx="14" cy="14" r="13.900"/></clipPath><g clip-path="url(#c3)" fill="#fdfdfd"><circle cx="13.900" cy="11" r="6"/><path d="M10.500 15.500C9 17.500 4.700 19 4.500 25.500 7 28 21 28 23.300 25.500 23.100 19 18.800 17.500 17.300 15.500z"/></g></svg>
<div class="nm" style="top:16px">Shivangi B</div>
<div class="sel" style="left:319px;width:304px;top:6px">Monthly</div><i class="car2" style="left:606px;top:23px"></i>
<div class="tx" style="left:634px;top:16px">All Emp</div>
<div class="sel" style="left:843px;width:301px;top:6px">Yes</div><i class="car2" style="left:1127px;top:23px"></i>
<div class="tx" style="left:1155.500px;top:16px"><span class=ru>₹</span>25,000.00</div>
<div class="act" style="top:11px"><i></i><i></i><i></i></div>
</div>
<div class="tr" style="top:304px;height:72px">
<div class="ln"></div>
<svg class="av" style="top:21px" viewBox="-1 -1 30 30"><clipPath id="c4"><circle cx="14" cy="14" r="13.800"/></clipPath><g clip-path="url(#c4)"><rect x="-1" y="-1" width="30" height="30" fill="#a6d0de"/><rect x="11.800" y="2.200" width="2" height="3.300" rx=".6" fill="#1b2a36"/><circle cx="18" cy="4.700" r="1.700" fill="#1b2a36"/><circle cx="18" cy="4.700" r=".7" fill="#6fa3b8"/><path d="M9 7.500h10l2-3" stroke="#1b2a36" stroke-width=".6" fill="none"/><rect x="0" y="7.900" width="28" height="8.300" fill="#13202b"/><rect x="1.500" y="9.300" width="24" height="1.700" fill="#fff"/><path d="M3.500 12.700h3.500m1 0h2.500m1 0h5.500" stroke="#e8eef2" stroke-width=".9"/><path d="M3.500 14.600h5" stroke="#5d7384" stroke-width=".5"/><circle cx="21.400" cy="14.200" r="1.200" fill="#c8d3da"/><rect x="0" y="16.200" width="28" height="8" fill="#fbfcfd"/><rect x="1" y="16.200" width="1.200" height="8" fill="#13202b"/><rect x="25.800" y="16.200" width="1.200" height="8" fill="#13202b"/><path d="M4 17.800h.8M4 19.800h.8" stroke="#13202b" stroke-width=".9"/><path d="M5.500 17.800h11M5.500 19.800h7" stroke="#9aa9b4" stroke-width=".5"/><circle cx="6" cy="21.500" r="1.300" fill="#13202b"/><circle cx="19.800" cy="19.300" r="1.700" fill="#13202b"/><path d="M16.300 24c0-2.600 1.500-3.600 3.500-3.600s3.500 1 3.500 3.600z" fill="#13202b"/><rect x="2" y="23.600" width="24" height=".8" fill="#13202b"/><rect x="0" y="24.400" width="28" height="5" fill="#2c5b78"/></g></svg>
<div class="nm" style="top:16px">Nicky</div><div class="ds" style="top:46px">PHP developer</div>
<div class="sel" style="left:319px;width:304px;top:17px;height:38px">Monthly</div><i class="car2" style="left:606px;top:34px"></i>
<div class="tx" style="left:634px;top:28px;letter-spacing:.8px">--</div>
<div class="sel" style="left:843px;width:301px;top:17px;height:38px">Yes</div><i class="car2" style="left:1127px;top:34px"></i>
<div class="tx" style="left:1155.500px;top:28px"><span class=ru>₹</span>20,000.00</div>
<div class="act" style="top:22px"><i></i><i></i><i></i></div>
</div>
<div class="tr" style="top:376px;height:72px">
<div class="ln"></div>
<svg class="av" style="top:21px" viewBox="-1 -1 30 30"><circle cx="14" cy="14" r="14.600" fill="#ececec"/><circle cx="14" cy="14" r="13.900" fill="#c5c5c5"/><clipPath id="c5"><circle cx="14" cy="14" r="13.900"/></clipPath><g clip-path="url(#c5)" fill="#fdfdfd"><circle cx="13.900" cy="11" r="6"/><path d="M10.500 15.500C9 17.500 4.700 19 4.500 25.500 7 28 21 28 23.300 25.500 23.100 19 18.800 17.500 17.300 15.500z"/></g></svg>
<div class="nm" style="top:16px">mike</div><div class="ds" style="top:46px">Marketing executive</div>
<div class="sel" style="left:319px;width:304px;top:17px;height:38px">Monthly</div><i class="car2" style="left:606px;top:34px"></i>
<div class="tx" style="left:634px;top:28px">All Emp</div>
<div class="sel" style="left:843px;width:301px;top:17px;height:38px">Yes</div><i class="car2" style="left:1127px;top:34px"></i>
<div class="tx" style="left:1155.500px;top:28px"><span class=ru>₹</span>20,000.00</div>
<div class="act" style="top:22px"><i></i><i></i><i></i></div>
</div>
<div class="tr" style="top:448px;height:72px">
<div class="ln"></div>
<svg class="av" style="top:21px" viewBox="-1 -1 30 30"><circle cx="14" cy="14" r="14.600" fill="#ececec"/><circle cx="14" cy="14" r="13.900" fill="#c5c5c5"/><clipPath id="c6"><circle cx="14" cy="14" r="13.900"/></clipPath><g clip-path="url(#c6)" fill="#fdfdfd"><circle cx="13.900" cy="11" r="6"/><path d="M10.500 15.500C9 17.500 4.700 19 4.500 25.500 7 28 21 28 23.300 25.500 23.100 19 18.800 17.500 17.300 15.500z"/></g></svg>
<div class="nm" style="top:16px">Mihika</div><div class="ds" style="top:46px">Marketing executive</div>
<div class="sel" style="left:319px;width:304px;top:17px;height:38px">Monthly</div><i class="car2" style="left:606px;top:34px"></i>
<div class="tx" style="left:634px;top:28px">All Emp</div>
<div class="sel" style="left:843px;width:301px;top:17px;height:38px">Yes</div><i class="car2" style="left:1127px;top:34px"></i>
<div class="tx" style="left:1155.500px;top:28px"><span class=ru>₹</span>30,000.00</div>
<div class="act" style="top:22px"><i></i><i></i><i></i></div>
</div>
<div class="tr" style="top:520px;height:72px">
<div class="ln"></div>
<svg class="av" style="top:21px" viewBox="-1 -1 30 30"><defs><linearGradient id="gm" x1="0.150" y1="0.100" x2="0.850" y2="0.900"><stop offset="0" stop-color="#e2e2e2"/><stop offset=".5" stop-color="#bdbdbd"/><stop offset="1" stop-color="#808080"/></linearGradient><clipPath id="c7"><circle cx="14" cy="14" r="14.200"/></clipPath></defs><circle cx="14" cy="14" r="14.200" fill="url(#gm)"/><g clip-path="url(#c7)" stroke="#f3f3f3" stroke-width=".9" stroke-dasharray=".9 1" fill="none"><path d="M7.500 23.300L26.500 7.800"/><path d="M8.500 24.800L27.500 9.300" opacity=".9"/><path d="M9.800 26.200L28.500 10.800" opacity=".75"/></g></svg>
<div class="nm" style="top:16px">michel</div><div class="ds" style="top:46px">Marketing executive</div>
<div class="sel" style="left:319px;width:304px;top:17px;height:38px">Monthly</div><i class="car2" style="left:606px;top:34px"></i>
<div class="tx" style="left:634px;top:28px">All Emp</div>
<div class="sel" style="left:843px;width:301px;top:17px;height:38px">No</div><i class="car2" style="left:1127px;top:34px"></i>
<div class="tx" style="left:1155.500px;top:28px;letter-spacing:.8px">--</div>
<div class="add" style="top:26px"><svg viewBox="0 0 12 12" width="12" height="12"><path d="M4.800 0h2.400v4.800H12v2.400H7.200V12H4.800V7.200H0V4.800h4.800z" fill="#1d2130"/></svg>Add Salary</div>
</div>
<div class="tr" style="top:592px;height:72px">
<div class="ln"></div>
<svg class="av" style="top:21px" viewBox="-1 -1 30 30"><circle cx="14" cy="14" r="14.600" fill="#ececec"/><circle cx="14" cy="14" r="13.900" fill="#c5c5c5"/><clipPath id="c8"><circle cx="14" cy="14" r="13.900"/></clipPath><g clip-path="url(#c8)" fill="#fdfdfd"><circle cx="13.900" cy="11" r="6"/><path d="M10.500 15.500C9 17.500 4.700 19 4.500 25.500 7 28 21 28 23.300 25.500 23.100 19 18.800 17.500 17.300 15.500z"/></g></svg>
<div class="nm" style="top:16px">Mahin</div><div class="ds" style="top:46px">Marketing executive</div>
<div class="sel" style="left:319px;width:304px;top:17px;height:38px">Monthly</div><i class="car2" style="left:606px;top:34px"></i>
<div class="tx" style="left:634px;top:28px">All Emp</div>
<div class="sel" style="left:843px;width:301px;top:17px;height:38px">Yes</div><i class="car2" style="left:1127px;top:34px"></i>
<div class="tx" style="left:1155.500px;top:28px"><span class=ru>₹</span>30,000.00</div>
<div class="act" style="top:22px"><i></i><i></i><i></i></div>
</div>
<div class="tr" style="top:664px;height:72px">
<div class="ln"></div>
<svg class="av" style="top:21px" viewBox="-1 -1 30 30"><circle cx="14" cy="14" r="14.600" fill="#ececec"/><circle cx="14" cy="14" r="13.900" fill="#c5c5c5"/><clipPath id="c9"><circle cx="14" cy="14" r="13.900"/></clipPath><g clip-path="url(#c9)" fill="#fdfdfd"><circle cx="13.900" cy="11" r="6"/><path d="M10.500 15.500C9 17.500 4.700 19 4.500 25.500 7 28 21 28 23.300 25.500 23.100 19 18.800 17.500 17.300 15.500z"/></g></svg>
<div class="nm" style="top:16px">Bhavya Jain</div><div class="ds" style="top:46px">Laravel developer</div>
<div class="sel" style="left:319px;width:304px;top:17px;height:38px">Monthly</div><i class="car2" style="left:606px;top:34px"></i>
<div class="tx" style="left:634px;top:28px">Special Group</div>
<div class="sel" style="left:843px;width:301px;top:17px;height:38px">Yes</div><i class="car2" style="left:1127px;top:34px"></i>
<div class="tx" style="left:1155.500px;top:28px"><span class=ru>₹</span>11,000.00</div>
<div class="act" style="top:22px"><i></i><i></i><i></i></div>
</div>
<div class="tr" style="top:736px;height:1px"><div class="ln"></div></div>
<div class="abs" style="left:20px;top:759px;font-size:14px;line-height:16px;color:#28313c">Show</div>
<div class="abs" style="left:59px;top:750px;width:53px;height:36px;border:1px solid #e7e9eb;border-radius:4px;background:#fff;font-size:14px;line-height:16px;color:#28313c;padding:9px 0 0 8px">10</div>
<svg class="abs" style="left:89px;top:762px" width="8" height="10" viewBox="0 0 8 10"><path d="M4 0l3.500 4h-7zM4 10l3.500-4h-7z" fill="#28313c"/></svg>
<div class="abs" style="left:116px;top:759px;font-size:14px;line-height:16px;color:#28313c">entries</div>
<div class="abs" style="left:1158px;top:759px;font-size:14px;line-height:16px;color:#28313c;white-space:nowrap;letter-spacing:.08px">Showing 1 to 10 of 12 entries</div>
<div class="pb" style="left:1354px;top:747px;width:75px;color:#7b8593">Previous</div>
<div class="pb" style="left:1437px;top:747px;width:34px;background:#3a2de0;border-color:#3a2de0;color:#fff">1</div>
<div class="pb" style="left:1479px;top:747px;width:34px">2</div>
<div class="pb" style="left:1521px;top:747px;width:52px">Next</div>
</div>
<div id="ov-logo"><svg viewBox="130 82 718 718" width="60" height="60"><path d="M332 585V343L490 254l126 71v52L490 449" fill="none" stroke="#353535" stroke-width="64"/><path d="M418 372v206l72 42 160-92v-90" fill="none" stroke="#f26a2a" stroke-width="60"/></svg></div>
<div class="ovb" style="left:77px;width:49px">Stop</div>
<div class="ovb" style="left:136px;width:100px">Discard</div>
<div class="ovb" style="left:246px;width:38px;border:1px solid #e3e3e3"><svg viewBox="0 0 20 20" width="20" height="20" style="margin:12px auto 0"><g fill="none" stroke="#111" stroke-width="1.400" stroke-linecap="round" stroke-linejoin="round"><path d="M19.300 5.500H1M5.300 1L1 5.500 5.300 10"/><path d="M.7 14.500h18.300M14.700 10l4.300 4.500-4.300 4.500"/></g></svg></div>
<div class="abs" style="left:1877px;top:915px;width:23px;height:28px;border-radius:5px;background:#45464b;color:#fff;font-weight:bold;font-size:13px;line-height:28px;font-family:'DejaVu Sans','Liberation Sans',sans-serif;text-align:center">2</div>
</body>
</html>
